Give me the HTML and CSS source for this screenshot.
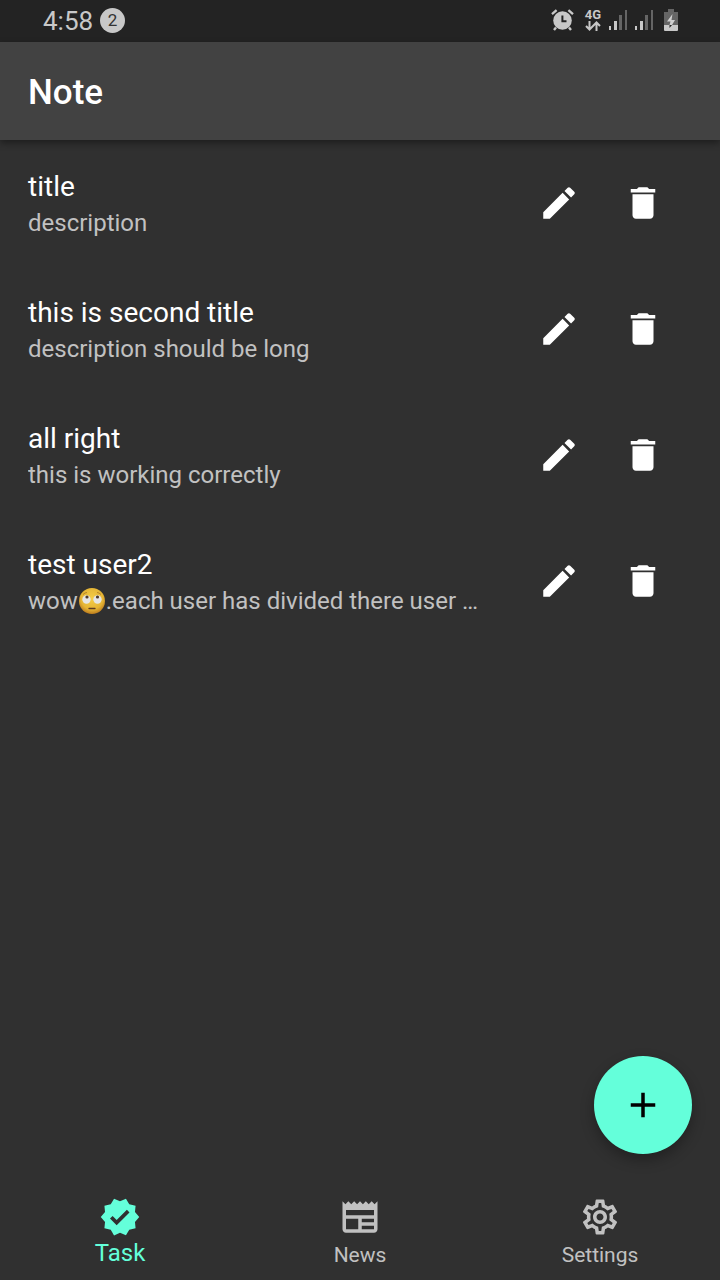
FILE: index.html
```html
<!DOCTYPE html>
<html lang="en">
<head>
<meta charset="utf-8">
<meta name="viewport" content="width=device-width, initial-scale=1">
<title>Note</title>
<link rel="stylesheet" href="styles.css">
</head>
<body>
<svg class="sprite" aria-hidden="true">
  <symbol id="edit" viewBox="0 0 24 24"><path d="M3 17.25V21h3.75L17.81 9.94l-3.75-3.75L3 17.25zM20.71 7.04c.39-.39.39-1.02 0-1.41l-2.34-2.34c-.39-.39-1.02-.39-1.41 0l-1.83 1.83 3.75 3.75 1.83-1.83z"/></symbol>
  <symbol id="trash" viewBox="0 0 24 24"><path d="M6 19c0 1.1.9 2 2 2h8c1.1 0 2-.9 2-2V7H6v12zM19 4h-3.5l-1-1h-5l-1 1H5v2h14V4z"/></symbol>
  <symbol id="signal" viewBox="0 0 18 21"><path d="M0 16h2v4H0zM5 11h3v9H5z"/><path opacity=".4" d="M10 5h3v15h-3zM16 0h2v20h-2z"/></symbol>
</svg>
<div class="app">
  <div class="status">
    <span class="clock">4:58</span>
    <span class="count">2</span>
    <div class="indicators">
      <svg class="alarm" viewBox="0 0 23 22" aria-label="Alarm"><circle cx="11.500" cy="11.500" r="9.300" fill="currentColor"/><path d="M1 5.200L5.600 1.200M22 5.200L17.400 1.200M5 18.500L3 21M18 18.500L20 21" stroke="currentColor" stroke-width="2.400"/><path d="M11.400 6.500V12.200H15.500" fill="none" stroke="#232323" stroke-width="2"/></svg>
      <span class="network">4G<svg class="arrows" viewBox="0 0 16 10" aria-hidden="true"><path d="M4.500 0v8M1 5l3.500 3.500L8 5M11.500 10V2M8 5l3.500-3.500L15 5" fill="none" stroke="currentColor" stroke-width="2"/></svg></span>
      <svg class="signal" aria-label="Signal 1"><use href="#signal"/></svg>
      <svg class="signal" aria-label="Signal 2"><use href="#signal"/></svg>
      <svg class="battery" viewBox="0 0 14 23" aria-label="Battery charging"><path fill="#656565" d="M4 0h6v3h4v13H0V3h4z"/><path fill="#c8c8c8" d="M0 16h14v5a1 1 0 0 1-1 1H1a1 1 0 0 1-1-1z"/><path fill="#d0d0d0" d="M8.500 5L3 12.500h3.500L5.500 16h2.500l3-5H7.500z"/><path fill="#232323" d="M5.500 16h2.500l-2.500 3z"/></svg>
    </div>
  </div>
  <header class="bar"><h1 class="heading">Note</h1></header>
  <main class="content">
    <ul class="notes">
      <li class="note">
        <div class="text"><h2 class="title">title</h2><p class="description">description</p></div>
        <button class="action" aria-label="Edit"><svg class="icon"><use href="#edit"/></svg></button>
        <button class="action" aria-label="Delete"><svg class="icon"><use href="#trash"/></svg></button>
      </li>
      <li class="note">
        <div class="text"><h2 class="title">this is second title</h2><p class="description">description should be long</p></div>
        <button class="action" aria-label="Edit"><svg class="icon"><use href="#edit"/></svg></button>
        <button class="action" aria-label="Delete"><svg class="icon"><use href="#trash"/></svg></button>
      </li>
      <li class="note">
        <div class="text"><h2 class="title">all right</h2><p class="description">this is working correctly</p></div>
        <button class="action" aria-label="Edit"><svg class="icon"><use href="#edit"/></svg></button>
        <button class="action" aria-label="Delete"><svg class="icon"><use href="#trash"/></svg></button>
      </li>
      <li class="note">
        <div class="text"><h2 class="title">test user2</h2><p class="description">wow<svg class="emoji" viewBox="0 0 28 28" role="img" aria-label="Face with rolling eyes"><defs><radialGradient id="face" cx=".5" cy=".4" r=".6"><stop offset="0" stop-color="#f4cd48"/><stop offset=".7" stop-color="#e5b535"/><stop offset="1" stop-color="#bd7c1e"/></radialGradient></defs><circle cx="14" cy="14" r="13" fill="url(#face)"/><circle cx="8.500" cy="12.500" r="4.200" fill="#e6e6e6"/><circle cx="19.500" cy="12.500" r="4.200" fill="#e6e6e6"/><circle cx="9" cy="10" r="1.600" fill="#4e392b"/><circle cx="19.500" cy="10" r="1.600" fill="#4e392b"/><path d="M5 7.500q2-2 4-2M23 7.500q-2-2-4-2" fill="none" stroke="#a87523" stroke-width=".8"/><path d="M11 21.500h6" stroke="#5c3b22" stroke-width="1.300" stroke-linecap="round"/></svg>.each user has divided there user …</p></div>
        <button class="action" aria-label="Edit"><svg class="icon"><use href="#edit"/></svg></button>
        <button class="action" aria-label="Delete"><svg class="icon"><use href="#trash"/></svg></button>
      </li>
    </ul>
    <button class="add" aria-label="Add note"><svg class="icon" viewBox="0 0 24 24"><path d="M19 13h-6v6h-2v-6H5v-2h6V5h2v6h6v2z"/></svg></button>
  </main>
  <nav class="tabs">
    <a class="tab active" href="#task"><svg class="icon" viewBox="0 0 24 24"><path d="M23 12l-2.440-2.790.340-3.690-3.610-.820-1.890-3.200L12 2.960 8.600 1.500 6.710 4.690 3.100 5.500l.340 3.700L1 12l2.440 2.790-.340 3.700 3.610.820L8.600 22.500l3.400-1.470 3.400 1.460 1.890-3.190 3.610-.820-.340-3.690L23 12zm-12.910 4.720l-3.800-3.810 1.480-1.480 2.320 2.330 5.850-5.870 1.480 1.480-7.330 7.350z"/></svg><span>Task</span></a>
    <a class="tab" href="#news"><svg class="icon" viewBox="0 0 24 24"><path fill-rule="evenodd" d="M22 3l-1.670 1.670L18.670 3 17 4.670 15.330 3l-1.660 1.670L12 3l-1.670 1.670L8.670 3 7 4.670 5.330 3 3.670 4.670 2 3v16c0 1.100.9 2 2 2h16c1.100 0 2-.9 2-2V3zM11 19H4v-6h7v6zM20 19h-7v-2h7v2zM20 15h-7v-2h7v2zM20 11H4V8h16v3z"/></svg><span>News</span></a>
    <a class="tab" href="#settings"><svg class="icon" viewBox="0 0 24 24"><path d="M19.430 12.980c.04-.32.07-.64.07-.98 0-.34-.03-.66-.07-.98l2.110-1.650c.19-.15.24-.42.12-.64l-2-3.460c-.09-.16-.26-.25-.44-.25-.06 0-.12.01-.17.03l-2.490 1c-.52-.4-1.080-.73-1.690-.98l-.38-2.650C14.460 2.180 14.250 2 14 2h-4c-.25 0-.46.18-.49.42l-.38 2.650c-.61.25-1.170.59-1.690.98l-2.490-1c-.06-.02-.12-.03-.18-.03-.17 0-.34.09-.43.25l-2 3.460c-.13.22-.07.49.12.64l2.110 1.650c-.04.32-.07.65-.07.98 0 .33.03.66.07.98l-2.110 1.650c-.19.15-.24.42-.12.64l2 3.460c.09.16.26.25.44.25.06 0 .12-.01.17-.03l2.490-1c.52.4 1.080.73 1.690.98l.38 2.650c.03.24.24.42.49.42h4c.25 0 .46-.18.49-.42l.38-2.650c.61-.25 1.170-.59 1.690-.98l2.490 1c.06.02.12.03.18.03.17 0 .34-.09.43-.25l2-3.460c.12-.22.07-.49-.12-.64l-2.110-1.650zm-1.980-1.710c.04.31.05.52.05.73 0 .21-.02.43-.05.73l-.14 1.130.89.7 1.080.84-.7 1.210-1.270-.51-1.040-.42-.9.68c-.43.32-.84.56-1.250.73l-1.060.43-.16 1.130-.2 1.350h-1.400l-.19-1.350-.16-1.130-1.060-.43c-.43-.18-.83-.41-1.230-.71l-.91-.7-1.060.43-1.270.51-.7-1.210 1.080-.84.89-.7-.14-1.130c-.03-.31-.05-.54-.05-.74s.02-.43.05-.73l.14-1.130-.89-.7-1.080-.84.7-1.210 1.270.51 1.040.42.9-.68c.43-.32.84-.56 1.250-.73l1.060-.43.16-1.130.2-1.350h1.390l.19 1.350.16 1.130 1.060.43c.43.18.83.41 1.230.71l.91.7 1.060-.43 1.270-.51.7 1.210-1.070.85-.89.7.14 1.130zM12 8c-2.210 0-4 1.790-4 4s1.790 4 4 4 4-1.790 4-4-1.790-4-4-4zm0 6c-1.100 0-2-.9-2-2s.9-2 2-2 2 .9 2 2-.9 2-2 2z"/></svg><span>Settings</span></a>
  </nav>
</div>
</body>
</html>
```
FILE: styles.css
```css
* { box-sizing: border-box; }
body {
  margin: 0;
  background: #303030;
  color: #fff;
  font-family: Roboto, "Noto Sans", sans-serif;
}
button { border: 0; padding: 0; font: inherit; cursor: pointer; }
.sprite { display: none; }
.app { display: flex; flex-direction: column; min-height: 100vh; }
.icon { display: block; width: 42px; height: 42px; fill: currentColor; }

.status {
  display: flex;
  align-items: center;
  gap: 7px;
  height: 42px;
  padding: 0 42px 2px 43px;
  background: #232323;
  color: #c8c8c8;
}
.clock { font-size: 26px; line-height: 40px; padding-top: 2px; }
.count {
  width: 25px;
  height: 25px;
  border-radius: 50%;
  background: #c8c8c8;
  color: #333;
  font-size: 17px;
  line-height: 25px;
  text-align: center;
}
.indicators { display: flex; align-items: center; gap: 8px; margin-left: auto; }
.alarm { width: 23px; height: 22px; margin-right: 3px; }
.network {
  display: flex;
  flex-direction: column;
  align-items: center;
  font-size: 13px;
  line-height: 12px;
  font-weight: 700;
}
.arrows { width: 16px; height: 10px; }
.signal { width: 18px; height: 21px; fill: currentColor; }
.battery { width: 14px; height: 23px; margin-left: 3px; }

.bar {
  display: flex;
  align-items: center;
  height: 98px;
  padding: 4px 28px 0;
  background: #424242;
  box-shadow: 0 3px 7px rgba(0, 0, 0, .4);
}
.heading { margin: 0; font-size: 35px; line-height: 42px; font-weight: 500; }

.content { display: flex; flex-direction: column; flex: 1; }
.notes { flex: 1; margin: 0; padding: 0; list-style: none; }
.note { display: flex; align-items: center; height: 126px; padding: 0 35px 0 28px; }
.text { flex: 1; min-width: 0; margin-right: 28px; padding-top: 4px; }
.title { margin: 0; font-size: 28px; line-height: 36px; font-weight: 400; }
.description {
  margin: 0;
  overflow: hidden;
  color: #c1c1c1;
  font-size: 24px;
  line-height: 36px;
  white-space: nowrap;
  text-overflow: ellipsis;
}
.emoji { width: 28px; height: 28px; vertical-align: -6px; }
.action {
  display: grid;
  place-items: center;
  width: 84px;
  height: 84px;
  background: none;
  color: #fff;
}
.add {
  display: grid;
  place-items: center;
  align-self: flex-end;
  width: 98px;
  height: 98px;
  margin: 0 28px 28px;
  border-radius: 50%;
  background: #64ffda;
  color: #000;
  box-shadow: 0 6px 14px rgba(0, 0, 0, .3);
}

.tabs { display: flex; height: 98px; }
.tab {
  display: flex;
  flex: 1;
  flex-direction: column;
  align-items: center;
  padding-top: 14px;
  color: #c1c1c1;
  font-size: 21px;
  line-height: 34px;
  text-decoration: none;
}
.active { color: #64ffda; font-size: 24px; line-height: 30px; }
```
